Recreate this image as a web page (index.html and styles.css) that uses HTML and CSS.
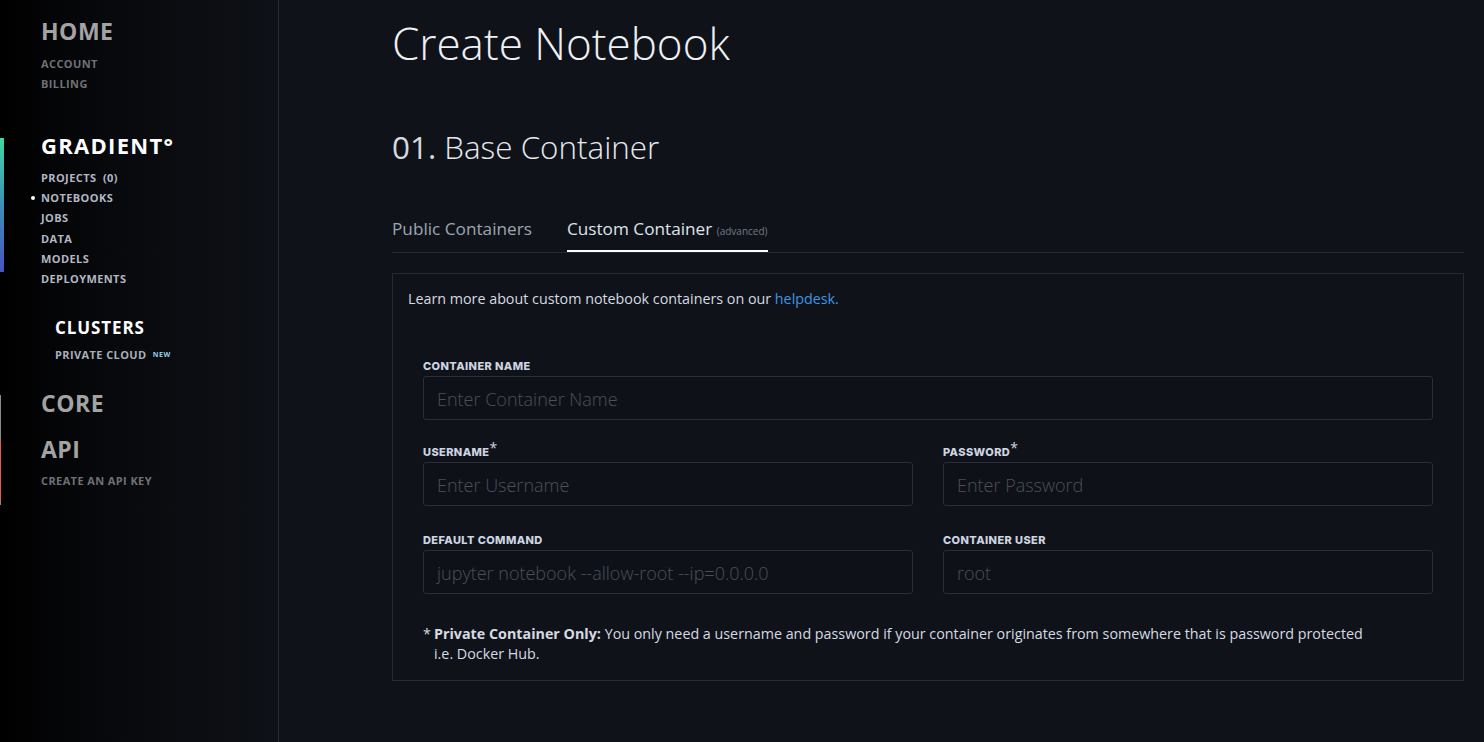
FILE: index.html
```html
<!DOCTYPE html>
<html lang="en">
<head>
<meta charset="utf-8">
<title>Create Notebook</title>
<link rel="stylesheet" href="styles.css">
</head>
<body>
<div class="app">
  <aside class="sidebar">
    <section class="nav-sec sec-home">
      <h2 class="nav-title">HOME</h2>
      <ul class="nav-list muted">
        <li>ACCOUNT</li>
        <li>BILLING</li>
      </ul>
    </section>
    <section class="nav-sec sec-gradient">
      <h2 class="nav-title bright">GRADIENT°</h2>
      <ul class="nav-list light">
        <li>PROJECTS&nbsp;&nbsp;(0)</li>
        <li class="current">NOTEBOOKS</li>
        <li>JOBS</li>
        <li class="gap">DATA</li>
        <li>MODELS</li>
        <li>DEPLOYMENTS</li>
      </ul>
    </section>
    <section class="nav-sec sec-clusters">
      <h3 class="nav-sub">CLUSTERS</h3>
      <ul class="nav-list light">
        <li>PRIVATE CLOUD <span class="new">NEW</span></li>
      </ul>
    </section>
    <section class="nav-sec sec-core">
      <h2 class="nav-title">CORE</h2>
      <h2 class="nav-title api">API</h2>
      <ul class="nav-list muted">
        <li>CREATE AN API KEY</li>
      </ul>
    </section>
  </aside>

  <main class="main">
    <h1 class="page-title">Create Notebook</h1>
    <h2 class="step-title"><span class="step-num">01.</span> Base Container</h2>

    <div class="tabs">
      <div class="tab">Public Containers</div>
      <div class="tab active">Custom Container <span class="tab-note">(advanced)</span></div>
    </div>

    <div class="panel">
      <p class="intro">Learn more about custom notebook containers on our <a class="link">helpdesk.</a></p>
      <div class="form">
        <div class="field full">
          <label class="label">CONTAINER NAME</label>
          <div class="input placeholder">Enter Container Name</div>
        </div>
        <div class="row">
          <div class="field">
            <label class="label">USERNAME<span class="req">*</span></label>
            <div class="input placeholder">Enter Username</div>
          </div>
          <div class="field">
            <label class="label">PASSWORD<span class="req">*</span></label>
            <div class="input placeholder">Enter Password</div>
          </div>
        </div>
        <div class="row">
          <div class="field">
            <label class="label">DEFAULT COMMAND</label>
            <div class="input placeholder">jupyter notebook --allow-root --ip=0.0.0.0</div>
          </div>
          <div class="field">
            <label class="label">CONTAINER USER</label>
            <div class="input placeholder">root</div>
          </div>
        </div>
        <p class="footnote"><span class="star">*</span><span class="fn-body"><b>Private Container Only:</b> You only need a username and password if your container originates from somewhere that is password protected<br>i.e. Docker Hub.</span></p>
      </div>
    </div>
  </main>
</div>
</body>
</html>
```

FILE: styles.css
```css
* { box-sizing: border-box; }
html, body { margin: 0; padding: 0; height: 100%; }
body {
  background: #0f1319;
  font-family: "Open Sans", "Liberation Sans", sans-serif;
  color: #d4d8e0;
  overflow: hidden;
}
.app { display: flex; height: 742px; }

/* Sidebar */
.sidebar {
  width: 279px;
  flex: none;
  border-right: 1px solid #252a33;
  background: linear-gradient(90deg, #000 0%, #07080b 35%, #0c0e13 75%, #0e1117 100%);
  padding: 17px 0 0 41px;
  position: relative;
}
.nav-sec { position: relative; }
.nav-title {
  margin: 0;
  font-size: 23px;
  line-height: 28px;
  font-weight: 700;
  letter-spacing: 0.5px;
  color: #a3a3a3;
}
.nav-title.bright { color: #ffffff; font-size: 22px; letter-spacing: 1.3px; }
.nav-list {
  list-style: none;
  margin: 9px 0 0;
  padding: 0;
  font-size: 11px;
  line-height: 20px;
  font-weight: 700;
  letter-spacing: 0.4px;
}
.nav-list li { position: relative; }
.nav-list li.gap { margin-top: 1px; }
.nav-list.muted { color: #6e7177; }
.nav-list.light { color: #b1b7c3; }
.nav-list li.current::before {
  content: "";
  position: absolute;
  left: -10px;
  top: 8px;
  width: 4px;
  height: 4px;
  border-radius: 50%;
  background: #ffffff;
}
.sec-gradient { margin-top: 37px; }
.sec-gradient::before {
  content: "";
  position: absolute;
  left: -41px;
  top: 7px;
  width: 4px;
  height: 134px;
  background: linear-gradient(180deg, #3fd8a6 0%, #3d8fb6 50%, #4655c4 100%);
}
.sec-gradient .nav-list { margin-top: 9px; }
.sec-clusters { margin-top: 27px; padding-left: 14px; }
.nav-sub {
  margin: 0;
  font-size: 17px;
  line-height: 24px;
  font-weight: 700;
  letter-spacing: 0.9px;
  color: #ffffff;
}
.sec-clusters .nav-list { margin-top: 5px; color: #a9afbb; }
.new {
  font-size: 7px;
  letter-spacing: 0.5px;
  color: #8fcfeb;
  vertical-align: 2px;
  margin-left: 3px;
}
.sec-core { margin-top: 24px; }
.sec-core::before {
  content: "";
  position: absolute;
  left: -41px;
  top: 6px;
  width: 1px;
  height: 110px;
  background: linear-gradient(180deg, #8a8a8a 0%, #8a8a8a 41%, #e0603c 41%, #e0603c 96%, #8a8a8a 96%);
}
.nav-title.api { margin-top: 18px; }
.sec-core .nav-list { margin-top: 8px; }

/* Main */
.main {
  flex: 1;
  padding: 12px 20px 0 113px;
  min-width: 0;
}
.page-title {
  margin: 0;
  font-size: 44px;
  line-height: 62px;
  font-weight: 300;
  color: #eef0f4;
}
.step-title {
  margin: 53px 0 0;
  font-size: 31.4px;
  line-height: 40px;
  font-weight: 300;
  color: #e6e9ee;
}
.step-num { font-weight: 400; color: #d6d9de; }

.tabs {
  margin-top: 50px;
  display: flex;
  gap: 35px;
  border-bottom: 1px solid #262a32;
}
.tab {
  font-size: 17.2px;
  line-height: 24px;
  padding-bottom: 7px;
  color: #9da5b1;
  border-bottom: 2px solid transparent;
}
.tab.active { color: #dfe3ea; border-bottom-color: #ffffff; }
.tab-note { font-size: 10px; color: #727987; }

.panel {
  margin-top: 20px;
  border: 1px solid #262a32;
  padding: 15px 30px 16px 15px;
}
.intro {
  margin: 0;
  font-size: 14.3px;
  line-height: 20px;
  color: #d6dae2;
}
.link { color: #3e93e4; text-decoration: none; }

.form { padding-left: 15px; margin-top: 50px; }
.row { display: flex; gap: 30px; margin-top: 25px; }
.row .field { flex: 1; min-width: 0; }
.row + .row { margin-top: 27px; }
.label {
  display: block;
  font-family: "Inter", "Liberation Sans", sans-serif;
  font-size: 11px;
  line-height: 14px;
  font-weight: 800;
  color: #cdd4e2;
  margin-bottom: 3px;
  letter-spacing: 0.4px;
}
.req {
  font-family: "Open Sans", sans-serif;
  font-size: 14px;
  font-weight: 400;
  vertical-align: 3px;
  line-height: 0;
  letter-spacing: 0;
}
.input {
  height: 44px;
  border: 1px solid #2a2e37;
  border-radius: 3px;
  background: #0e1218;
  padding: 1px 13px 0;
  display: flex;
  align-items: center;
  font-size: 18px;
  font-weight: 300;
  white-space: nowrap;
  overflow: hidden;
}
.placeholder { color: #4b5058; }

.footnote {
  margin: 30px 0 0;
  display: flex;
  font-size: 14.3px;
  line-height: 20px;
  color: #d6dae2;
}
.star { width: 11px; flex: none; }
.fn-body b { font-weight: 700; }
```
